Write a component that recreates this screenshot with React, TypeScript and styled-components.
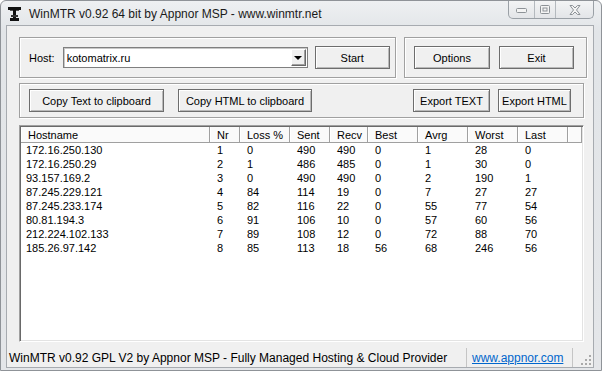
import styled, { createGlobalStyle } from 'styled-components';

const GlobalStyle = createGlobalStyle`
  html, body {
    margin: 0;
    padding: 0;
    background: #ffffff;
  }
  * {
    box-sizing: border-box;
  }
`;

const Window = styled.div`
  width: 602px;
  height: 371px;
  display: flex;
  flex-direction: column;
  border: 1px solid #8f9398;
  border-radius: 6px 6px 0 0;
  background: linear-gradient(#eef0f2, #e2e5e8 30px, #e4e6e9);
  font-family: 'Liberation Sans', Arial, sans-serif;
  color: #000;
`;

const TitleBar = styled.div`
  height: 24px;
  flex: none;
  display: flex;
  align-items: center;
  padding-left: 7px;
`;

const AppIcon = styled.svg`
  width: 13px;
  height: 14px;
  margin-top: 2px;
  flex: none;
`;

const Title = styled.span`
  margin-left: 8px;
  margin-top: 1px;
  font-size: 12px;
  color: #1a1a1a;
  white-space: nowrap;
`;

const CaptionGroup = styled.div`
  margin-left: auto;
  margin-right: 7px;
  align-self: flex-start;
  display: flex;
  height: 18px;
  border: 1px solid #9aa0a6;
  border-top: none;
  border-radius: 0 0 5px 5px;
  background: linear-gradient(#f3f4f5, #e3e5e8);
  overflow: hidden;
`;

const CaptionButton = styled.div<{ $w: number; $last?: boolean }>`
  width: ${({ $w }) => $w}px;
  display: flex;
  align-items: center;
  justify-content: center;
  border-right: ${({ $last }) => ($last ? 'none' : '1px solid #b4b9be')};
  svg {
    display: block;
  }
`;

const Client = styled.div`
  flex: 1;
  margin: 0 7px 2px 5px;
  display: flex;
  flex-direction: column;
  border: 1px solid #a7abb0;
  background: #f0f0f0;
  font-size: 11px;
`;

const Body = styled.div`
  flex: 1;
  display: flex;
  flex-direction: column;
  padding: 11px 9px 4px 12px;
`;

const TopRow = styled.div`
  display: flex;
  gap: 8px;
`;

const GroupBox = styled.div<{ $w?: number; $h: number; $mt?: number; $pr?: number }>`
  ${({ $w }) => ($w ? `width: ${$w}px; flex: none;` : 'flex: 1 1 0;')}
  height: ${({ $h }) => $h}px;
  margin-top: ${({ $mt }) => $mt ?? 0}px;
  display: flex;
  align-items: center;
  border: 1px solid #a0a0a0;
  box-shadow: inset 1px 1px #ffffff, 1px 1px #ffffff;
  padding: 0 ${({ $pr }) => $pr ?? 12}px 0 9px;
`;

const WideGroup = styled(GroupBox)`
  flex: none;
`;

const Label = styled.span`
  margin-right: 8px;
  flex: none;
`;

const Combo = styled.div`
  width: 245px;
  height: 21px;
  margin-right: 7px;
  flex: none;
  display: flex;
  align-items: center;
  background: #ffffff;
  border: 1px solid #7f7f7f;
  box-shadow: inset 1px 1px #c8c8c8;
  padding: 1px 1px 1px 3px;
`;

const ComboText = styled.span`
  flex: 1;
`;

const DropButton = styled.div`
  width: 15px;
  height: 17px;
  display: flex;
  align-items: center;
  justify-content: center;
  background: #f0f0f0;
  border: 1px solid;
  border-color: #ffffff #696969 #696969 #ffffff;
  box-shadow: inset -1px -1px #a0a0a0;
`;

const Arrow = styled.div`
  width: 0;
  height: 0;
  border-left: 4px solid transparent;
  border-right: 4px solid transparent;
  border-top: 4px solid #000;
`;

const Button = styled.div<{ $w: number; $ml?: number }>`
  width: ${({ $w }) => $w}px;
  height: 23px;
  margin-left: ${({ $ml }) => $ml ?? 0}px;
  display: flex;
  align-items: center;
  justify-content: center;
  flex: none;
  background: #f0f0f0;
  border: 1px solid #6d6d6d;
  box-shadow: inset 1px 1px #ffffff, inset -1px -1px #b9b9b9;
  font-size: 11px;
  white-space: nowrap;
`;

const Spacer = styled.div`
  flex: 1;
`;

const ListView = styled.div`
  flex: 1;
  margin-top: 7px;
  display: flex;
  flex-direction: column;
  background: #ffffff;
  border: 1px solid;
  border-color: #a0a0a0 #ffffff #ffffff #a0a0a0;
  box-shadow: inset 1px 1px #696969, inset -1px -1px #e3e3e3;
  padding: 1px;
  overflow: hidden;
`;

const cols = [189, 30, 50, 40, 38, 50, 50, 50, 50];
const template = cols.map((c) => `${c}px`).join(' ') + ' 1fr';

const HeaderRow = styled.div`
  height: 16px;
  flex: none;
  display: grid;
  grid-template-columns: ${template};
  background: #fafafa;
  border-bottom: 1px solid #a0a0a0;
`;

const HeaderCell = styled.div`
  display: flex;
  align-items: center;
  padding-left: 7px;
  border-right: 1px solid #a0a0a0;
  box-shadow: inset 1px 0 #ffffff;
  white-space: nowrap;
  overflow: hidden;
`;

const Row = styled.div`
  height: 14px;
  flex: none;
  display: grid;
  grid-template-columns: ${template};
`;

const Cell = styled.div<{ $first?: boolean }>`
  display: flex;
  align-items: center;
  padding-left: ${({ $first }) => ($first ? 5 : 7)}px;
  white-space: nowrap;
`;

const StatusBar = styled.div`
  height: 21px;
  flex: none;
  display: flex;
  font-size: 12px;
  background: #f0f0f0;
  padding-top: 2px;
`;

const Pane = styled.div<{ $w?: number }>`
  ${({ $w }) => ($w ? `width: ${$w}px;` : 'flex: 1;')}
  display: flex;
  align-items: center;
  padding-left: 2px;
  border-right: 1px solid #c5c5c5;
  white-space: nowrap;
  overflow: hidden;
`;

const LinkPane = styled(Pane)`
  padding-left: 5px;
`;

const Link = styled.a`
  color: #0066cc;
  text-decoration: underline;
`;

const Grip = styled.div`
  flex: 1;
  display: flex;
  align-items: flex-end;
  justify-content: flex-end;
  padding: 0 1px 1px 0;
`;

const rows = [
  ['172.16.250.130', '1', '0', '490', '490', '0', '1', '28', '0'],
  ['172.16.250.29', '2', '1', '486', '485', '0', '1', '30', '0'],
  ['93.157.169.2', '3', '0', '490', '490', '0', '2', '190', '1'],
  ['87.245.229.121', '4', '84', '114', '19', '0', '7', '27', '27'],
  ['87.245.233.174', '5', '82', '116', '22', '0', '55', '77', '54'],
  ['80.81.194.3', '6', '91', '106', '10', '0', '57', '60', '56'],
  ['212.224.102.133', '7', '89', '108', '12', '0', '72', '88', '70'],
  ['185.26.97.142', '8', '85', '113', '18', '56', '68', '246', '56'],
];

const headers = ['Hostname', 'Nr', 'Loss %', 'Sent', 'Recv', 'Best', 'Avrg', 'Worst', 'Last'];

const App = () => {
  return (
    <>
      <GlobalStyle />
      <Window>
        <TitleBar>
          <AppIcon viewBox="0 0 13 14">
            <rect x="0" y="0" width="13" height="3" fill="#111" />
            <rect x="2" y="3" width="9" height="1" fill="#555" />
            <rect x="5" y="3" width="3" height="8" fill="#111" />
            <rect x="3" y="8" width="7" height="2" fill="#333" />
            <rect x="2" y="11" width="9" height="3" fill="#111" />
          </AppIcon>
          <Title>WinMTR v0.92 64 bit by Appnor MSP - www.winmtr.net</Title>
          <CaptionGroup>
            <CaptionButton $w={26}>
              <svg width="11" height="6" viewBox="0 0 11 6">
                <rect x="0.5" y="1.5" width="10" height="4" rx="1" fill="#f4f4f4" stroke="#8d9297" />
              </svg>
            </CaptionButton>
            <CaptionButton $w={21}>
              <svg width="10" height="9" viewBox="0 0 10 9">
                <rect x="0.5" y="0.5" width="9" height="8" rx="1" fill="#f4f4f4" stroke="#8d9297" />
                <rect x="3" y="3" width="4" height="3" fill="none" stroke="#8d9297" />
              </svg>
            </CaptionButton>
            <CaptionButton $w={37} $last>
              <svg width="12" height="10" viewBox="0 0 12 10">
                <path
                  d="M1 0.5 H3.5 L6 3 L8.5 0.5 H11 L7.5 5 L11 9.5 H8.5 L6 7 L3.5 9.5 H1 L4.5 5 Z"
                  fill="#f4f4f4"
                  stroke="#8d9297"
                  strokeLinejoin="round"
                />
              </svg>
            </CaptionButton>
          </CaptionGroup>
        </TitleBar>
        <Client>
          <Body>
            <TopRow>
              <GroupBox $w={377} $h={41} $pr={0}>
                <Label>Host:</Label>
                <Combo>
                  <ComboText>kotomatrix.ru</ComboText>
                  <DropButton>
                    <Arrow />
                  </DropButton>
                </Combo>
                <Button $w={75}>Start</Button>
              </GroupBox>
              <GroupBox $h={41}>
                <Button $w={76}>Options</Button>
                <Button $w={75} $ml={9}>Exit</Button>
              </GroupBox>
            </TopRow>
            <WideGroup $h={35} $mt={5}>
              <Button $w={135}>Copy Text to clipboard</Button>
              <Button $w={134} $ml={14}>Copy HTML to clipboard</Button>
              <Spacer />
              <Button $w={77}>Export TEXT</Button>
              <Button $w={73} $ml={8}>Export HTML</Button>
            </WideGroup>
            <ListView>
              <HeaderRow>
                {headers.map((h) => (
                  <HeaderCell key={h}>{h}</HeaderCell>
                ))}
                <HeaderCell />
              </HeaderRow>
              {rows.map((r) => (
                <Row key={r[0]}>
                  {r.map((v, i) => (
                    <Cell key={i} $first={i === 0}>
                      {v}
                    </Cell>
                  ))}
                </Row>
              ))}
            </ListView>
          </Body>
          <StatusBar>
            <Pane $w={460}>WinMTR v0.92 GPL V2 by Appnor MSP - Fully Managed Hosting &amp; Cloud Provider</Pane>
            <LinkPane $w={106}>
              <Link href="#">www.appnor.com</Link>
            </LinkPane>
            <Grip>
              <svg width="12" height="12" viewBox="0 0 12 12">
                {[
                  [10, 2], [10, 6], [10, 10], [6, 6], [6, 10], [2, 10],
                ].map(([x, y]) => (
                  <rect key={`${x}-${y}`} x={x - 1} y={y - 1} width="2" height="2" fill="#a9a9a9" />
                ))}
              </svg>
            </Grip>
          </StatusBar>
        </Client>
      </Window>
    </>
  );
};

export default App;
